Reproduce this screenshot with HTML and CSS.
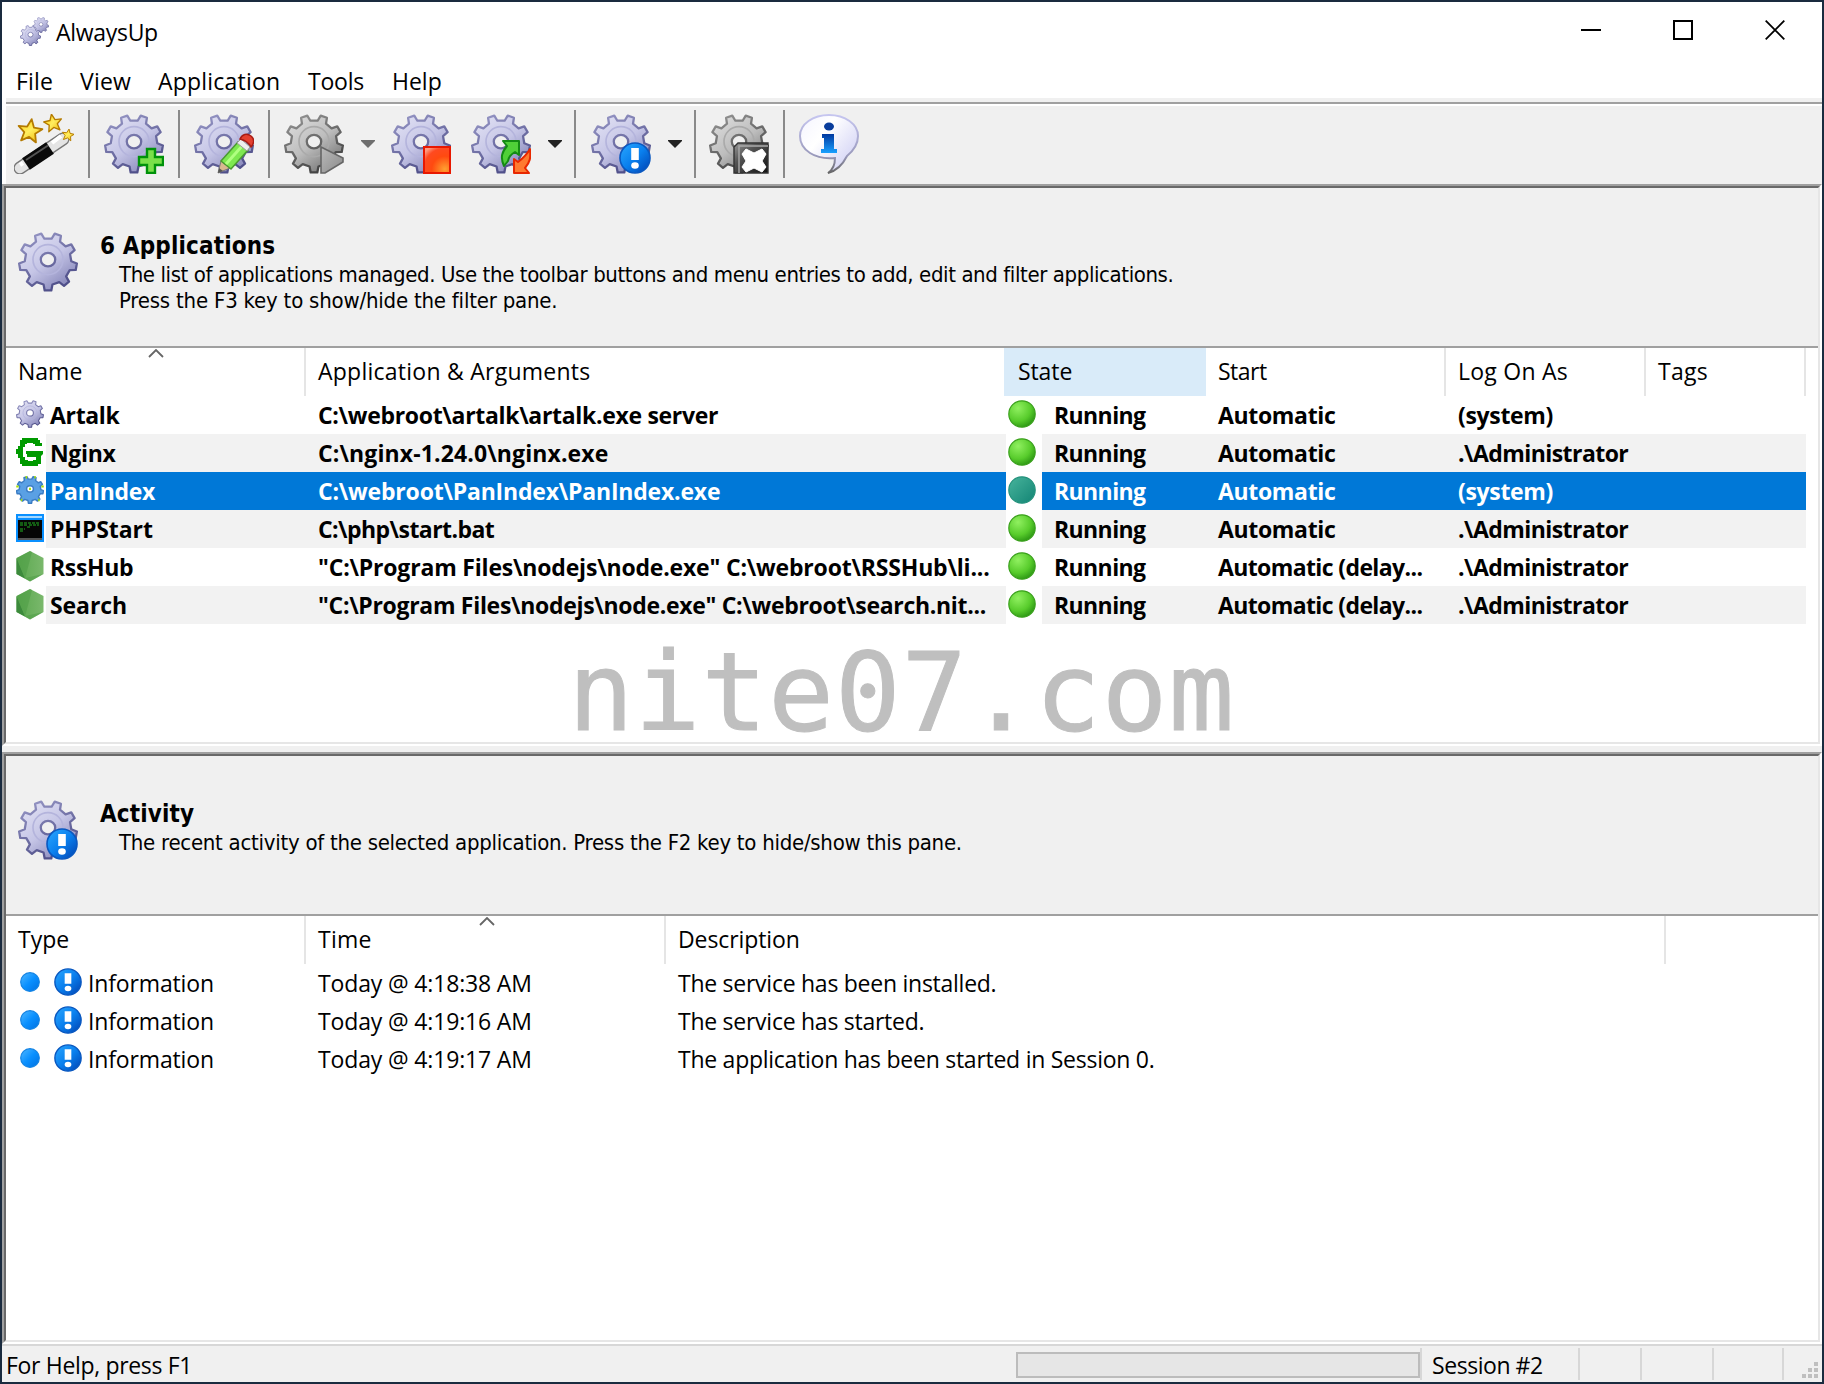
FILE: index.html
```html
<!DOCTYPE html>
<html lang="en">
<head>
<meta charset="utf-8">
<title>AlwaysUp</title>
<link rel="stylesheet" href="styles.css">
</head>
<body>
<svg class="defs" width="0" height="0">
  <defs>
    <linearGradient id="lilac" x1="0" y1="0" x2=".75" y2="1"><stop offset="0" stop-color="#e6e6f6"/><stop offset=".55" stop-color="#c5c5e6"/><stop offset="1" stop-color="#8484b8"/></linearGradient>
    <linearGradient id="lilacEdge" x1="0" y1="0" x2=".5" y2="1"><stop offset="0" stop-color="#9a9ac8"/><stop offset="1" stop-color="#50508a"/></linearGradient>
    <linearGradient id="gray" x1="0" y1="0" x2=".75" y2="1"><stop offset="0" stop-color="#e2e2e2"/><stop offset=".55" stop-color="#bdbdbd"/><stop offset="1" stop-color="#707070"/></linearGradient>
    <linearGradient id="grayEdge" x1="0" y1="0" x2=".5" y2="1"><stop offset="0" stop-color="#999"/><stop offset="1" stop-color="#444"/></linearGradient>
    <linearGradient id="gold" x1="0" y1="0" x2="1" y2="1"><stop offset="0" stop-color="#ffc800"/><stop offset=".5" stop-color="#ffee60"/><stop offset="1" stop-color="#f0b400"/></linearGradient>
    <radialGradient id="stopFill" cx=".8" cy=".85" r="1"><stop offset="0" stop-color="#ffa030"/><stop offset=".5" stop-color="#ff4a10"/><stop offset=".8" stop-color="#ff4a20"/><stop offset="1" stop-color="#ff9a80"/></radialGradient>
    <linearGradient id="blue" x1="0" y1="0" x2="1" y2="1"><stop offset="0" stop-color="#2aa8ff"/><stop offset=".5" stop-color="#0a80ee"/><stop offset="1" stop-color="#0040b0"/></linearGradient>
    <linearGradient id="sky" x1="0" y1="0" x2="1" y2="1"><stop offset="0" stop-color="#50b8ff"/><stop offset=".5" stop-color="#0a90ff"/><stop offset="1" stop-color="#0070e0"/></linearGradient>
    <radialGradient id="green" cx=".35" cy=".28" r=".8"><stop offset="0" stop-color="#90f060"/><stop offset=".6" stop-color="#58cc2c"/><stop offset="1" stop-color="#269010"/></radialGradient>
    <linearGradient id="teal" x1="0" y1="0" x2="1" y2="1"><stop offset="0" stop-color="#48b49c"/><stop offset="1" stop-color="#128474"/></linearGradient>
    <linearGradient id="dark" x1="0" y1="0" x2="1" y2="1"><stop offset="0" stop-color="#999"/><stop offset=".35" stop-color="#555"/><stop offset="1" stop-color="#111"/></linearGradient>
    <linearGradient id="play" x1="0" y1="0" x2="1" y2="1"><stop offset="0" stop-color="#bbb"/><stop offset="1" stop-color="#8a8a8a"/></linearGradient>
    <linearGradient id="bubble" x1="0" y1="0" x2="1" y2=".8"><stop offset="0" stop-color="#f4f4ff"/><stop offset=".4" stop-color="#fff"/><stop offset="1" stop-color="#cfcff4"/></linearGradient>
    <linearGradient id="bubbleEdge" x1="0" y1="0" x2="0" y2="1"><stop offset="0" stop-color="#c6c6f0"/><stop offset=".7" stop-color="#9a9abc"/><stop offset="1" stop-color="#666"/></linearGradient>
    <linearGradient id="inf" x1="0" y1="0" x2="0" y2="1"><stop offset="0" stop-color="#0038a0"/><stop offset="1" stop-color="#18a0ff"/></linearGradient>
    <linearGradient id="leaf" x1="0" y1="0" x2="1" y2="0"><stop offset="0" stop-color="#5aa84e"/><stop offset="1" stop-color="#7ab86c"/></linearGradient>
    <path id="gearShape" fill-rule="evenodd" stroke-linejoin="round" d="M4.3 22.1 3.2 27.8-3.2 27.8-4.3 22.1-10.9 19.7-15.5 23.3-20.3 19.3-17.5 14.2-21 8.1-26.8 8-27.9 1.7-22.5-.4-21.3-7.3-25.7-11.2-22.5-16.7-17-14.8-11.6-19.3-12.5-25.1-6.5-27.2-3.5-22.2 3.5-22.2 6.5-27.2 12.5-25.1 11.6-19.3 17-14.8 22.5-16.7 25.7-11.2 21.3-7.3 22.5-.4 27.9 1.7 26.8 8 21 8.1 17.5 14.2 20.3 19.3 15.5 23.3 10.9 19.7ZM7-2A7 6.5 0 1 0-7-2 7 6.5 0 1 0 7-2Z"/>
    <symbol id="gear" viewBox="-29 -28.700 58 58"><use href="#gearShape" fill="url(#lilac)" stroke="url(#lilacEdge)" stroke-width="2.2"/><circle cy="-2" r="14.5" fill="none" stroke="#b4b4dc" stroke-width="1.6"/></symbol>
    <symbol id="gearGray" viewBox="-29 -28.700 58 58"><use href="#gearShape" fill="url(#gray)" stroke="url(#grayEdge)" stroke-width="2.2"/><circle cy="-2" r="14.5" fill="none" stroke="#aaa" stroke-width="1.6"/></symbol>
    <symbol id="gearBlue" viewBox="-29 -28.700 58 58"><use href="#gearShape" fill="#5aa0e4" stroke="#3a7cc4" stroke-width="3"/><path d="M-9-26h3M9-26h3M-26-9v4M26-9v4M-19 21h3M17 21h3M-2-2h4" stroke="#a8e000" stroke-width="5"/></symbol>
    <symbol id="alert" viewBox="0 0 32 32"><circle cx="16" cy="16" r="15" fill="url(#blue)" stroke="#0a58c0" stroke-width="1.6"/><path d="M12.2 6h7.6v12h-7.6z" fill="#fff"/><ellipse cx="16" cy="23.5" rx="3.8" ry="3.2" fill="#fff"/></symbol>
    <symbol id="dot" viewBox="0 0 28 28"><circle cx="14" cy="14" r="13.2" fill="url(#green)" stroke="#3aa01c" stroke-width="1.2"/></symbol>
    <symbol id="dotSel" viewBox="0 0 28 28"><circle cx="14" cy="14" r="13.2" fill="url(#teal)" stroke="#24927c" stroke-width="1.2"/></symbol>
    <symbol id="bullet" viewBox="0 0 20 20"><circle cx="10" cy="10" r="9.3" fill="url(#sky)" stroke="#1484e4" stroke-width="1.2"/></symbol>
    <symbol id="hex" viewBox="0 0 28 32"><path d="M14 1 27.5 8v16L14 31.500 .5 24V8z" fill="url(#leaf)"/><path d="M.5 8 9 28.500 .5 24z" fill="#3c8a3c"/><path d="M27.500 24 14 31.500 9 28.500 16 2 14 1 1 8 9 28z" fill="#4c9c44" opacity=".5"/></symbol>
    <path id="star" d="M0-12 3.400-4 12-3.500 5.500 2 7.500 10.500 0 6-7.500 10.500-5.500 2-12-3.500-3.400-4Z" fill="url(#gold)" stroke="#b47a00" stroke-width="1.800" stroke-linejoin="round"/>
  </defs>
</svg>

<div class="window">
  <header class="titlebar">
    <svg class="app-icon" width="29" height="29" viewBox="0 0 29 29"><use href="#gear" x="0" y="8" width="21" height="21"/><use href="#gear" x="13" y="0" width="16" height="16"/></svg>
    <h1 class="title">AlwaysUp</h1>
    <div class="controls">
      <svg width="20" height="20" viewBox="0 0 20 20"><path d="M0 10h20" stroke="#000" stroke-width="2"/></svg>
      <svg width="20" height="20" viewBox="0 0 20 20"><path d="M1 1h18v18H1z" fill="none" stroke="#000" stroke-width="2"/></svg>
      <svg width="20" height="20" viewBox="0 0 20 20"><path d="m.7.7 18.600 18.600m0-18.600L.7 19.300" stroke="#000" stroke-width="1.800"/></svg>
    </div>
  </header>
  <nav class="menu"><span class="m-file">File</span><span class="m-view">View</span><span class="m-app">Application</span><span class="m-tools">Tools</span><span class="m-help">Help</span></nav>

  <div class="toolbar">
    <svg class="tool" viewBox="0 0 60 60">
      <path d="M6 54 49 25" stroke="#777" stroke-width="13" stroke-linecap="round"/>
      <path d="M6 54 49 25" stroke="#e4e4e4" stroke-width="10.500" stroke-linecap="round"/>
      <path d="M12 50 36 34" stroke="#0a0a0a" stroke-width="14"/>
      <path d="m12 46 22-14.500" stroke="#555" stroke-width="2"/>
      <path d="m38 29 9-7M6 51l3-2" stroke="#fff" stroke-width="4"/>
      <use href="#star" transform="translate(16 17) rotate(8)"/>
      <use href="#star" transform="translate(39 9) rotate(-10) scale(.75)"/>
      <use href="#star" transform="translate(54 21) rotate(10) scale(.5)"/>
    </svg>
    <i class="sep"></i>
    <svg class="tool" viewBox="0 0 60 60"><use href="#gear" width="60" height="60"/><path d="M43 35h8v8h8v8h-8v8h-8v-8h-8v-8h8z" fill="#7ae04a" stroke="#00920a" stroke-width="2.400"/></svg>
    <i class="sep"></i>
    <svg class="tool" viewBox="0 0 60 60"><use href="#gear" width="60" height="60"/><path d="m24 59 3-12 9 7z" fill="#d8b890" stroke="#777" stroke-width="1"/><path d="m24 59 1-5 4 3z" fill="#555"/><path d="m27 47 17-19 10 8-17 19z" fill="#7ee850" stroke="#4a9a30" stroke-width="1.500"/><path d="m32 50 17-19" stroke="#b0ff80" stroke-width="3"/><path d="m43 29 4-4 9 8-3 4z" fill="#eee" stroke="#999" stroke-width="1"/><path d="M46 25c2-5 7-6 11-3s3 8 0 11c-2-4-7-7-11-8z" fill="#e44030" stroke="#a81c14" stroke-width="1.500"/></svg>
    <i class="sep"></i>
    <svg class="tool" viewBox="0 0 60 60"><use href="#gearGray" width="60" height="60"/><path d="M37 33 59 44v4L41 59h-4z" fill="url(#play)" stroke="#666" stroke-width="1.600"/></svg>
    <svg class="drop off" viewBox="0 0 14 8"><path d="M0 0h14v1L7 8 0 1z"/></svg>
    <svg class="tool stop" viewBox="0 0 60 60"><use href="#gear" width="60" height="60"/><path d="M33 33h26v26H33z" fill="url(#stopFill)" stroke="#e81800" stroke-width="2"/></svg>
    <svg class="tool restart" viewBox="0 0 60 60"><use href="#gear" width="60" height="60"/><path d="M32 27h16v14l-4-3c-5 3-6 5-7 9l-4 5c-4-9-2-14 3-20z" fill="#50d038" stroke="#148a14" stroke-width="2" stroke-linejoin="round"/><path d="M43 59V45l4 3c4-3 8-6 12-13 1 9 0 13-5 19l4 5z" fill="#ff7a30" stroke="#e82800" stroke-width="2" stroke-linejoin="round"/></svg>
    <svg class="drop" viewBox="0 0 14 8"><path d="M0 0h14v1L7 8 0 1z"/></svg>
    <i class="sep after-drop"></i>
    <svg class="tool" viewBox="0 0 60 60"><use href="#gear" width="60" height="60"/><use href="#alert" x="28" y="28" width="32" height="32"/></svg>
    <svg class="drop second" viewBox="0 0 14 8"><path d="M0 0h14v1L7 8 0 1z"/></svg>
    <i class="sep after-drop"></i>
    <svg class="tool near" viewBox="0 0 60 60"><use href="#gearGray" width="60" height="60"/><path d="M29 29h30v30H25V33z" fill="url(#dark)" stroke="#333" stroke-width="1.400"/><path d="M30 59V32h29" fill="none" stroke="#aaa" stroke-width="1.400"/><path d="m37 35 8 4 8-4 4 5-4 7 4 6-4 5-8-4-8 4-4-5 4-6-4-7z" fill="#fff" stroke="#fff" stroke-linejoin="round"/></svg>
    <i class="sep"></i>
    <svg class="tool" viewBox="0 0 60 60"><path d="M30 1C46 1 59 10 59 22c0 9-5 15-11 20-3 6-8 14-19 17 6-4 7-9 7-15C16 46 1 36 1 22 1 10 14 1 30 1z" fill="url(#bubble)" stroke="url(#bubbleEdge)" stroke-width="2"/><ellipse cx="30" cy="12.500" rx="5" ry="4" fill="#083c9c"/><path d="M23 20h12v15h3v4H22v-4h3V24h-2z" fill="url(#inf)"/></svg>
  </div>

  <main class="panes">
    <section class="pane apps">
      <div class="banner">
        <svg class="banner-icon" viewBox="0 0 60 60"><use href="#gear" width="60" height="60"/></svg>
        <div class="banner-text"><h2>6 Applications</h2><p class="p1">The list of applications managed. Use the toolbar buttons and menu entries to add, edit and filter applications.</p><p class="p2">Press the F3 key to show/hide the filter pane.</p></div>
      </div>
      <div class="grid head">
        <span class="tight">Name<svg class="sort" viewBox="0 0 16 9"><path d="m1 8 7-7 7 7"/></svg></span><span class="no-edge">Application &amp; Arguments</span><span class="hot">State</span><span class="start">Start</span><span>Log On As</span><span>Tags</span>
      </div>
      <div class="grid row"><span class="icon"><svg viewBox="0 0 60 60"><use href="#gear" width="60" height="60"/></svg></span><span class="name">Artalk</span><span class="args">C:\webroot\artalk\artalk.exe server</span><span class="state"><svg><use href="#dot"/></svg></span><span class="run">Running</span><span>Automatic</span><span>(system)</span><span></span></div>
      <div class="grid row alt"><span class="icon"><svg viewBox="0 0 28 28"><path d="M6 0h16v2h2v3h2v3h-7V6h-2V5h-6v1H9v3H7v10h2v3h3v1h5v-1h3v-3h-9v-3h-1v-3h17v3l-2 2v8h-3v2H6v-2H4v-6H2v-4H0v-5h2V8h2V2h2z" fill="#009a00"/></svg></span><span class="name">Nginx</span><span class="args loose">C:\nginx-1.24.0\nginx.exe</span><span class="state"><svg><use href="#dot"/></svg></span><span class="run">Running</span><span>Automatic</span><span class="user">.\Administrator</span><span></span></div>
      <div class="grid row sel"><span class="icon"><svg viewBox="0 0 60 60"><use href="#gearBlue" width="60" height="60"/></svg></span><span class="name">PanIndex</span><span class="args pan">C:\webroot\PanIndex\PanIndex.exe</span><span class="state"><svg><use href="#dotSel"/></svg></span><span class="run">Running</span><span>Automatic</span><span>(system)</span><span></span></div>
      <div class="grid row alt"><span class="icon"><svg viewBox="0 0 28 28"><path d="M0 0h28v28H0z" fill="#0a90ff"/><path d="M2 2h24v2H2z" fill="#a4d8ff"/><path d="M2 6h24v20H2z" fill="#060606"/><path d="M2 24h24v2H2z" fill="#555"/><path d="M4 9h20M4 11h7m2 0h10M4 15h5m2-2h3M4 17h4" stroke="#187a18" stroke-width="1.400" stroke-dasharray="3 1"/></svg></span><span class="name short">PHPStart</span><span class="args tight">C:\php\start.bat</span><span class="state"><svg><use href="#dot"/></svg></span><span class="run">Running</span><span>Automatic</span><span class="user">.\Administrator</span><span></span></div>
      <div class="grid row"><span class="icon"><svg class="node"><use href="#hex"/></svg></span><span class="name">RssHub</span><span class="args node-cmd">"C:\Program Files\nodejs\node.exe" C:\webroot\RSSHub\li...</span><span class="state"><svg><use href="#dot"/></svg></span><span class="run">Running</span><span class="delay">Automatic (delay...</span><span class="user">.\Administrator</span><span></span></div>
      <div class="grid row alt"><span class="icon"><svg class="node"><use href="#hex"/></svg></span><span class="name short">Search</span><span class="args">"C:\Program Files\nodejs\node.exe" C:\webroot\search.nit...</span><span class="state"><svg><use href="#dot"/></svg></span><span class="run">Running</span><span class="delay">Automatic (delay...</span><span class="user">.\Administrator</span><span></span></div>
      <div class="watermark">nite07.com</div>
    </section>

    <section class="pane activity">
      <div class="banner">
        <svg class="banner-icon" viewBox="0 0 60 60"><use href="#gear" width="60" height="60"/><use href="#alert" x="28" y="28" width="32" height="32"/></svg>
        <div class="banner-text"><h2>Activity</h2><p class="p3">The recent activity of the selected application. Press the F2 key to hide/show this pane.</p></div>
      </div>
      <div class="log head">
        <span>Type</span><span>Time<svg class="sort" viewBox="0 0 16 9"><path d="m1 8 7-7 7 7"/></svg></span><span class="desc">Description</span>
      </div>
      <div class="log entry"><span><svg class="bullet"><use href="#bullet"/></svg><svg class="alert"><use href="#alert"/></svg>Information</span><span>Today @ 4:18:38 AM</span><span class="desc">The service has been installed.</span></div>
      <div class="log entry"><span><svg class="bullet"><use href="#bullet"/></svg><svg class="alert"><use href="#alert"/></svg>Information</span><span>Today @ 4:19:16 AM</span><span class="desc">The service has started.</span></div>
      <div class="log entry"><span><svg class="bullet"><use href="#bullet"/></svg><svg class="alert"><use href="#alert"/></svg>Information</span><span>Today @ 4:19:17 AM</span><span class="desc">The application has been started in Session 0.</span></div>
    </section>
  </main>

  <footer class="status">
    <span class="help">For Help, press F1</span><span class="progress"></span><span class="session">Session #2</span><span></span><span></span><span></span><span class="grip"><svg width="16" height="16" viewBox="0 0 16 16"><path d="M12 0h4v4h-4zM6 6h4v4H6zm6 0h4v4h-4zM0 12h4v4H0zm6 0h4v4H6zm6 0h4v4h-4z" fill="#bfbfbf"/></svg></span>
  </footer>
</div>
</body>
</html>
```
FILE: styles.css
```css
* { box-sizing: border-box; }
body {
  margin: 0;
  width: 1824px;
  height: 1384px;
  padding: 2px;
  overflow: hidden;
  background: #1a2b3f;
  font: 400 23px "Open Sans", "Noto Sans", sans-serif;
  letter-spacing: -0.15px;
  color: #000;
}
h1, h2, p { margin: 0; font-weight: 400; }
svg { display: block; flex: none; }
.defs { position: absolute; }

.window {
  width: 1820px;
  height: 1380px;
  display: flex;
  flex-direction: column;
  background: #fff;
}
.window > * { flex: none; }

/* title bar */
.titlebar { height: 62px; display: flex; align-items: flex-start; }
.app-icon { margin: 15px 0 0 18px; }
.title { margin-left: 7px; font-size: 23px; line-height: 61px; letter-spacing: -0.3px; }
.controls { margin: 18px 37px 0 auto; display: flex; gap: 72px; }

/* menu */
.menu {
  height: 34px;
  display: flex;
  line-height: 34px;
  padding-left: 14px;
  letter-spacing: 0.2px;
}
.menu span { flex: none; white-space: nowrap; }
.m-file { width: 64px; }
.m-view { width: 78px; }
.m-app { width: 150px; }
.m-tools { width: 84px; letter-spacing: -0.2px; }
.m-help { letter-spacing: 0; }

/* toolbar */
.toolbar {
  height: 86px;
  border-left: 4px solid #fff;
  display: flex;
  align-items: flex-start;
  padding: 16px 0 0 8px;
  background: #f0f0f0 linear-gradient(#f0f0f0 0 4px, #a0a0a0 4px 6px, #fff 6px 8px, transparent 8px);
}
.tool { width: 60px; height: 60px; }
.sep { width: 2px; height: 68px; margin: -4px 14px 0; background: #8a8a8a; flex: none; }
.drop { width: 14px; height: 8px; margin: 26px 0 0 17px; fill: #222; }
.drop.off { fill: #6e6e6e; }
.stop { margin-left: 16px; }
.restart { margin-left: 20px; }
.sep.after-drop { margin-left: 12px; margin-right: 15px; }
.sep.after-drop + .near { margin-left: -2px; }

/* panes */
.panes { display: flex; flex-direction: column; gap: 6px; background: #f0f0f0; }
.pane {
  background: #fff;
  width: 1820px;
  border: 2px solid;
  border-color: #a0a0a0 #fff #fff #a0a0a0;
  position: relative;
}
.pane::after {
  content: "";
  position: absolute;
  inset: 0;
  border: 2px solid;
  border-color: #696969 #e6e6e6 #e6e6e6 #696969;
}
.apps { height: 562px; }
.activity { height: 592px; }
.banner {
  height: 162px;
  background: #f0f0f0;
  border-bottom: 2px solid #a0a0a0;
  display: flex;
  padding: 46px 0 0 14px;
}
.banner-icon { width: 60px; height: 60px; }
.banner-text { margin-left: 22px; font-family: "DejaVu Sans Condensed", "DejaVu Sans", sans-serif; font-stretch: condensed; white-space: nowrap; }
.banner h2 { font-weight: 700; font-size: 24px; line-height: 28px; letter-spacing: 0.15px; margin-bottom: 2px; }
.banner p { font-size: 22px; line-height: 26px; padding-left: 19px; }
.p1 { letter-spacing: -0.4px; }
.p2 { letter-spacing: -0.21px; }
.p3 { letter-spacing: -0.27px; }

/* tables */
.grid { display: grid; grid-template-columns: 302px 698px 202px 240px 200px 160px; height: 38px; white-space: nowrap; }
.head.grid, .head.log { height: 48px; line-height: 46px; letter-spacing: 0.25px; }
.head span { position: relative; padding-left: 12px; border-right: 2px solid #e5e5e5; }
.head span:first-child { padding-left: 14px; letter-spacing: 0; }
.head span.hot { background: #d9ebf9; border-color: #d9ebf9; padding-left: 14px; letter-spacing: -0.1px; }
.head span.no-edge { border-color: transparent; }
.head span.start { letter-spacing: -0.5px; }
.head span.desc { letter-spacing: -0.1px; }
.sort { position: absolute; left: 50%; margin-left: -6px; top: 1px; width: 16px; height: 9px; fill: none; stroke: #666; stroke-width: 1.8; }
.row {
  grid-template-columns: 42px 260px 700px 36px 164px 240px 200px 160px;
  line-height: 38px;
  font-weight: 700;
  letter-spacing: -0.34px;
}
.row > span { padding-left: 12px; }
.row > .icon { padding: 4px 0 0 12px; }
.icon svg { width: 28px; height: 28px; }
.icon svg.node { height: 32px; margin-top: -2px; }
.row > .name { padding-left: 4px; }
.row > .args { letter-spacing: -0.31px; }
.row > .state { padding: 4px 0 0 2px; }
.state svg { width: 28px; height: 28px; }
.row > .run { letter-spacing: -0.6px; }
.row > .user { letter-spacing: -0.56px; }
.row > .delay { letter-spacing: -0.62px; }
.row > .short { letter-spacing: -0.08px; }
.row > .loose { letter-spacing: 0.12px; }
.row > .tight { letter-spacing: -0.56px; }
.row > .pan { letter-spacing: -0.2px; }
.row > .node-cmd { letter-spacing: -0.19px; }
.row.alt > span:not(.icon, .state) { background: #f2f2f2; }
.row.sel > span:not(.icon, .state) { background: #0078d7; color: #fff; }

.log { display: grid; grid-template-columns: 302px 360px 1000px; height: 38px; line-height: 38px; white-space: nowrap; }
.entry span { display: flex; padding-left: 12px; }
.entry span:first-child { padding-left: 16px; }
.entry .desc { letter-spacing: -0.26px; }
.bullet { width: 20px; height: 20px; margin-top: 8px; }
.alert { width: 28px; height: 28px; margin: 4px 6px 0 14px; }

.watermark {
  position: absolute;
  left: 564px;
  top: 443px;
  font: 400 109px/112px "DejaVu Sans Mono", monospace;
  padding-top: 8px;
  height: 112px;
  letter-spacing: 1.1px;
  color: #bfbfbf;
  -webkit-text-stroke: 1px #bfbfbf;
}

/* status bar */
.status {
  height: 38px;
  background: #f0f0f0;
  border-top: 2px solid #d7d7d7;
  display: grid;
  grid-template-columns: 1014px 408px 156px 62px 72px 70px 38px;
  grid-template-rows: 32px;
  padding: 2px 0;
  line-height: 34px;
  white-space: nowrap;
}
.status span:not(.help, .progress, .grip) { border-right: 2px solid #d7d7d7; }
.help { padding-left: 4px; letter-spacing: -0.33px; }
.status .progress { border: 2px solid #bcbcbc; background: #e6e6e6; width: 404px; height: 26px; margin-top: 4px; position: relative; }
.progress::after { content: ""; position: absolute; left: 402px; top: -6px; width: 2px; height: 32px; background: #d7d7d7; }
.session { padding-left: 8px; letter-spacing: -0.45px; }
.grip { padding: 14px 0 0 18px; }
```
